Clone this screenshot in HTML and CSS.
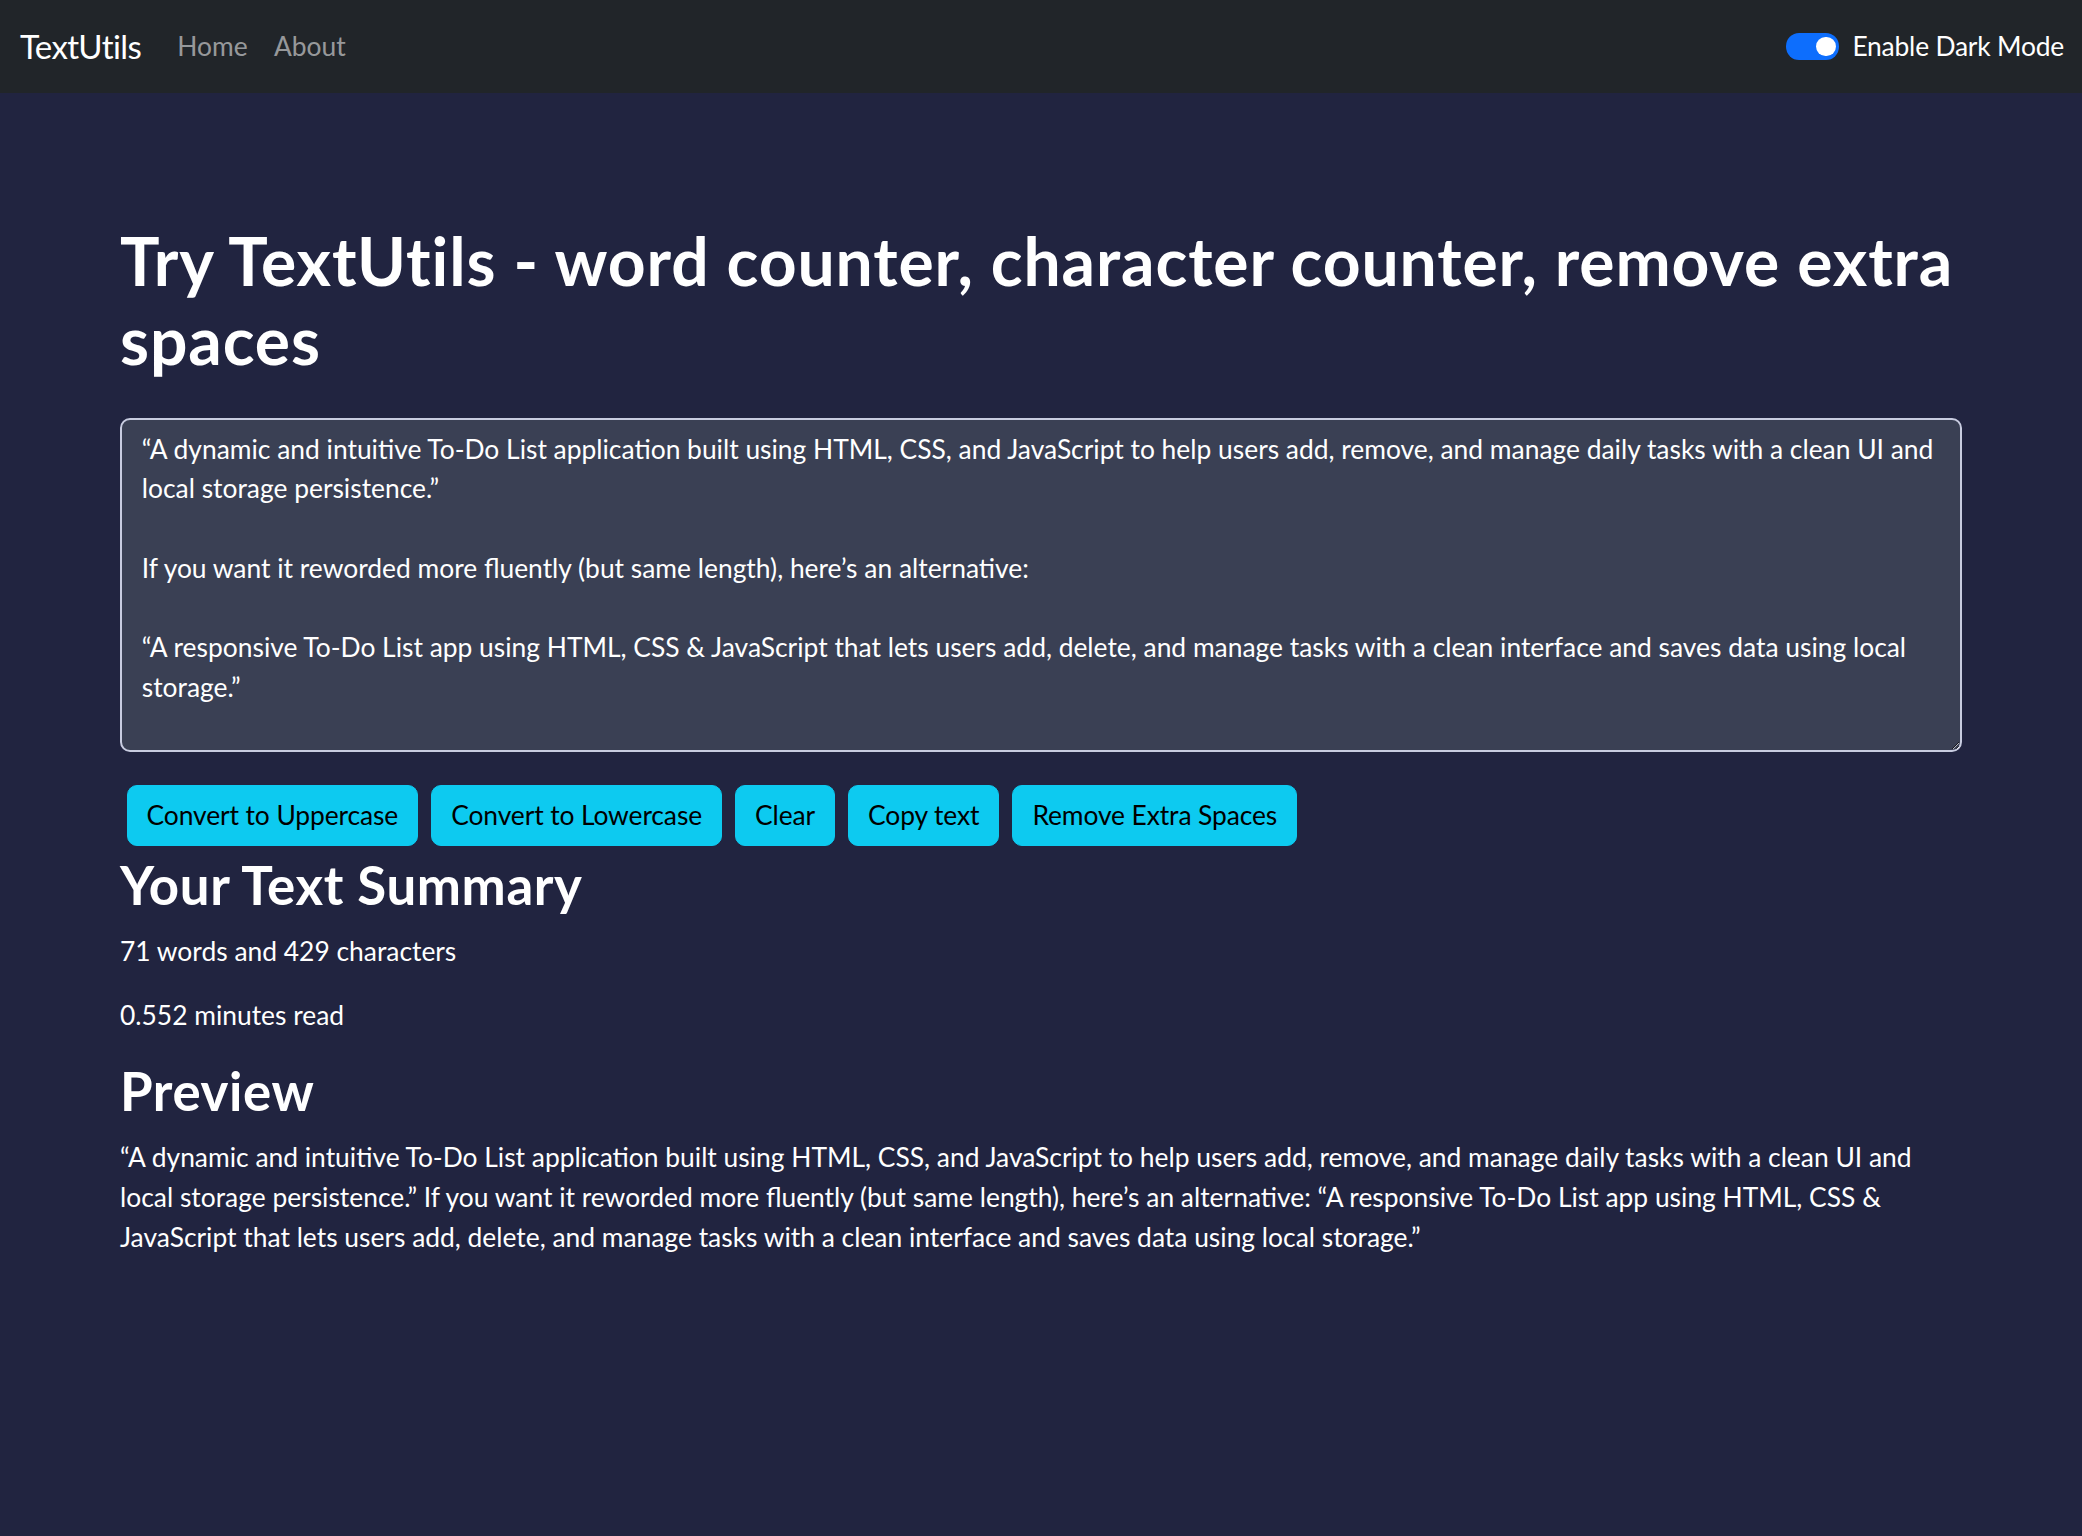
FILE: index.html
```html
<!DOCTYPE html>
<html lang="en">
<head>
<meta charset="utf-8">
<title>TextUtils</title>
<link rel="stylesheet" href="styles.css">
</head>
<body>
<nav class="navbar">
  <a class="brand" href="#">TextUtils</a>
  <ul class="nav-links">
    <li><a href="#">Home</a></li>
    <li><a href="#">About</a></li>
  </ul>
  <div class="mode-switch">
    <span class="toggle"><span class="knob"></span></span>
    <label class="mode-label">Enable Dark Mode</label>
  </div>
</nav>
<main class="container">
  <h1 class="title">Try TextUtils - word counter, character counter, remove extra spaces</h1>
  <textarea class="text-box" rows="8">“A dynamic and intuitive To-Do List application built using HTML, CSS, and JavaScript to help users add, remove, and manage daily tasks with a clean UI and local storage persistence.”

If you want it reworded more fluently (but same length), here’s an alternative:

“A responsive To-Do List app using HTML, CSS &amp; JavaScript that lets users add, delete, and manage tasks with a clean interface and saves data using local storage.”</textarea>
  <div class="actions">
    <button class="btn">Convert to Uppercase</button>
    <button class="btn">Convert to Lowercase</button>
    <button class="btn">Clear</button>
    <button class="btn">Copy text</button>
    <button class="btn">Remove Extra Spaces</button>
  </div>
  <section class="summary">
    <h2 class="section-title">Your Text Summary</h2>
    <p class="stat">71 words and 429 characters</p>
    <p class="stat">0.552 minutes read</p>
    <h2 class="section-title">Preview</h2>
    <p class="preview">“A dynamic and intuitive To-Do List application built using HTML, CSS, and JavaScript to help users add, remove, and manage daily tasks with a clean UI and local storage persistence.” If you want it reworded more fluently (but same length), here’s an alternative: “A responsive To-Do List app using HTML, CSS &amp; JavaScript that lets users add, delete, and manage tasks with a clean interface and saves data using local storage.”</p>
  </section>
</main>
</body>
</html>
```
FILE: styles.css
```css
* { box-sizing: border-box; }

html, body {
  margin: 0;
  padding: 0;
}

body {
  background: #212440;
  color: #ffffff;
  font-family: "Lato", "Noto Sans", sans-serif;
  font-size: 26.4px;
  line-height: 1.5;
  min-height: 1536px;
}

/* ---------- navbar ---------- */
.navbar {
  display: flex;
  align-items: center;
  height: 93px;
  padding: 0 18px 0 20px;
  background: #212529;
}

.brand {
  font-size: 33px;
  line-height: 1.5;
  color: #ffffff;
  text-decoration: none;
  letter-spacing: -0.6px;
  margin-right: 23px;
}

.nav-links {
  display: flex;
  list-style: none;
  margin: 0;
  padding: 0;
}

.nav-links a {
  display: block;
  padding: 0 13.2px;
  font-size: 26.4px;
  color: rgba(255, 255, 255, 0.55);
  text-decoration: none;
}

.mode-switch {
  margin-left: auto;
  display: flex;
  align-items: center;
  gap: 13.2px;
}

.toggle {
  display: flex;
  align-items: center;
  justify-content: flex-end;
  width: 52.8px;
  height: 26.4px;
  padding: 0 3.3px;
  border-radius: 13.2px;
  background: #0d6efd;
}

.knob {
  width: 19.8px;
  height: 19.8px;
  border-radius: 50%;
  background: #ffffff;
}

.mode-label {
  font-size: 26.4px;
  color: #ffffff;
  letter-spacing: -0.2px;
}

/* ---------- main ---------- */
.container {
  width: 1842px;
  margin: 0 auto;
  padding-top: 128px;
}

.title {
  margin: 0 0 39px;
  font-size: 66px;
  font-weight: 700;
  line-height: 1.2;
  letter-spacing: 0.9px;
}

.text-box {
  display: block;
  width: 100%;
  height: 334px;
  margin: 0 0 26.4px;
  padding: 9.5px 19.8px 3px;
  font-family: "Lato", "Noto Sans", sans-serif;
  font-size: 26.4px;
  line-height: 1.5;
  color: #ffffff;
  background: #3a4054;
  border: 2px solid #c8cce0;
  border-radius: 10px;
  outline: none;
  overflow: hidden;
}

.actions {
  display: flex;
  flex-wrap: wrap;
  gap: 13px;
  padding: 6.6px;
}

.btn {
  font-family: "Lato", "Noto Sans", sans-serif;
  font-size: 26.4px;
  line-height: 39.6px;
  letter-spacing: -0.1px;
  padding: 9.5px 19px;
  color: #000000;
  background: #0dcaf0;
  border: 1.65px solid #0dcaf0;
  border-radius: 10px;
  cursor: pointer;
}

.section-title {
  margin: 0 0 16.5px;
  font-size: 52.8px;
  font-weight: 700;
  line-height: 1.2;
  letter-spacing: 0.6px;
}

.stat {
  margin: 0 0 23.5px;
}

.preview {
  margin: 0 0 26.4px;
}
```
